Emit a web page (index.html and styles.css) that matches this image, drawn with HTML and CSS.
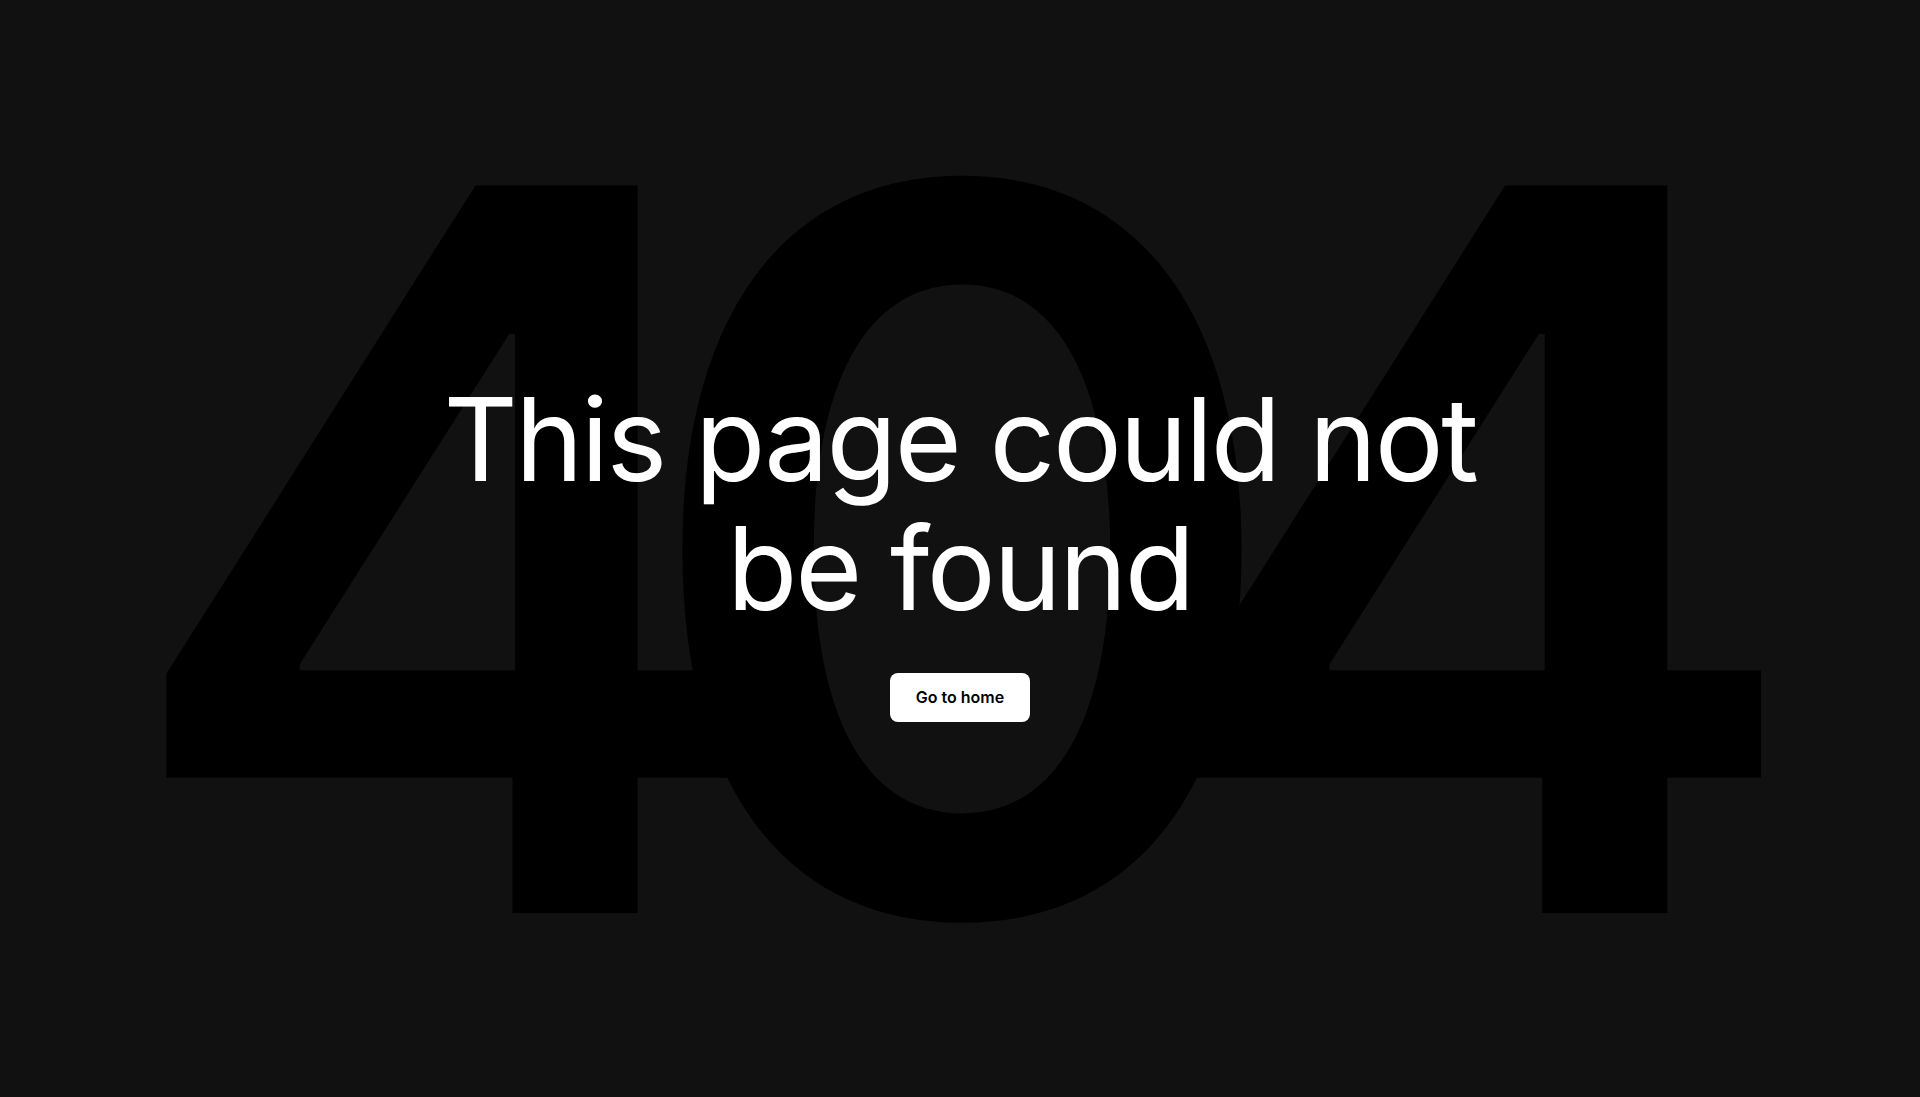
FILE: index.html
```html
<!DOCTYPE html>
<html lang="en">
<head>
<meta charset="utf-8">
<title>404: This page could not be found</title>
<link rel="stylesheet" href="styles.css">
</head>
<body>
<main class="page">
  <div class="backdrop" aria-hidden="true"><span class="code">404</span></div>
  <section class="content">
    <h1 class="title">This page could not be found</h1>
    <a class="home-btn" href="#">Go to home</a>
  </section>
</main>
</body>
</html>
```
FILE: styles.css
```css
* { box-sizing: border-box; }
html, body { margin: 0; padding: 0; height: 100%; }
body {
  background: #111111;
  color: #ffffff;
  font-family: Inter, "Noto Sans", sans-serif;
  overflow: hidden;
}
.page {
  position: relative;
  width: 100%;
  height: 100vh;
  display: flex;
  align-items: center;
  justify-content: center;
  overflow: hidden;
}
.backdrop {
  position: absolute;
  inset: 0;
  display: flex;
  align-items: center;
  justify-content: center;
  overflow: hidden;
  z-index: 0;
}
.code {
  font-size: 1000px;
  line-height: 1;
  font-weight: 600;
  color: #000000;
  letter-spacing: -0.148em;
  margin-right: 0.148em;
  margin-left: 4px;
}
.content {
  position: relative;
  z-index: 1;
  display: flex;
  flex-direction: column;
  align-items: center;
  gap: 40px;
}
.title {
  margin: 0;
  max-width: 1100px;
  font-size: 115px;
  line-height: 129px;
  font-weight: 400;
  text-align: center;
  letter-spacing: -0.02em;
}
.home-btn {
  display: inline-block;
  background: #ffffff;
  color: #000000;
  text-decoration: none;
  font-size: 16px;
  font-weight: 600;
  line-height: 24px;
  padding: 12px 26px 13px;
  border-radius: 8px;
}
```
